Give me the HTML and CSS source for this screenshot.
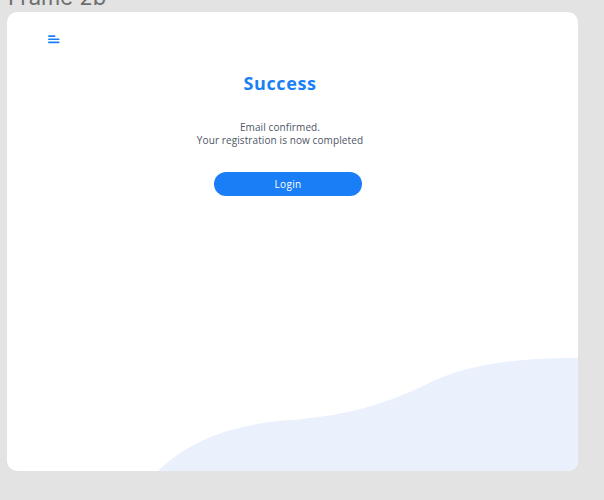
FILE: index.html
```html
<!DOCTYPE html>
<html lang="en">
<head>
<meta charset="utf-8">
<title>Frame 2b</title>
<link rel="stylesheet" href="styles.css">
</head>
<body>
<div class="frame-label">Frame 2b</div>
<main class="card">
  <header class="card-header">
    <svg class="menu-icon" width="12" height="10" viewBox="0 0 12 10" aria-hidden="true">
      <rect x="0" y="0.3" width="7.5" height="1.6" rx="0.8" fill="#1a7ff6"/>
      <rect x="0" y="3.5" width="11.5" height="1.6" rx="0.8" fill="#1a7ff6"/>
      <rect x="0" y="6.6" width="11.5" height="1.6" rx="0.8" fill="#1a7ff6"/>
    </svg>
  </header>
  <section class="content">
    <h1 class="title">Success</h1>
    <p class="message">Email confirmed.<br>Your registration is now completed</p>
    <button class="login-btn" type="button">Login</button>
  </section>
  <svg class="wave" width="571" height="113" viewBox="0 0 571 113" preserveAspectRatio="none" aria-hidden="true">
    <path d="M151 113 C 185 80, 230 66, 283 62 C 340 58, 380 45, 416 28 C 455 8, 500 0, 571 0 V 113 Z" fill="#eaf0fc"/>
  </svg>
</main>
</body>
</html>
```
FILE: styles.css
```css
html, body {
  margin: 0;
  padding: 0;
}
body {
  background: #e3e3e3;
  width: 604px;
  height: 500px;
  overflow: hidden;
  padding-left: 7px;
  box-sizing: border-box;
  font-family: "Open Sans", "Lato", sans-serif;
}
.frame-label {
  font-family: "Inter", "Liberation Sans", sans-serif;
  font-size: 22px;
  line-height: 22px;
  height: 22px;
  margin-top: -14.5px;
  margin-bottom: 4.5px;
  padding-left: 1px;
  color: #6e6e6e;
  white-space: nowrap;
}
.card {
  width: 571px;
  height: 459px;
  background: #ffffff;
  border-radius: 10px;
  overflow: hidden;
  display: flex;
  flex-direction: column;
}
.card-header {
  padding: 23px 0 0 41px;
  height: 10px;
}
.menu-icon {
  display: block;
}
.content {
  display: flex;
  flex-direction: column;
  align-items: center;
  width: 546px;
}
.title {
  margin: 26.5px 0 0;
  font-size: 18px;
  line-height: 22px;
  font-weight: 700;
  color: #1a7ff6;
  letter-spacing: 0.6px;
}
.message {
  margin: 27.5px 0 0;
  font-size: 10px;
  line-height: 13.4px;
  color: #4d5566;
  text-align: center;
  letter-spacing: 0.1px;
}
.login-btn {
  margin: 23.7px 0 0 16px;
  width: 148px;
  height: 24px;
  border: none;
  border-radius: 12px;
  background: #1a7ff6;
  color: #ffffff;
  font-family: "Open Sans", "Lato", sans-serif;
  font-size: 10px;
  letter-spacing: 0.3px;
  padding: 0;
}
.wave {
  display: block;
  margin-top: auto;
}
```
